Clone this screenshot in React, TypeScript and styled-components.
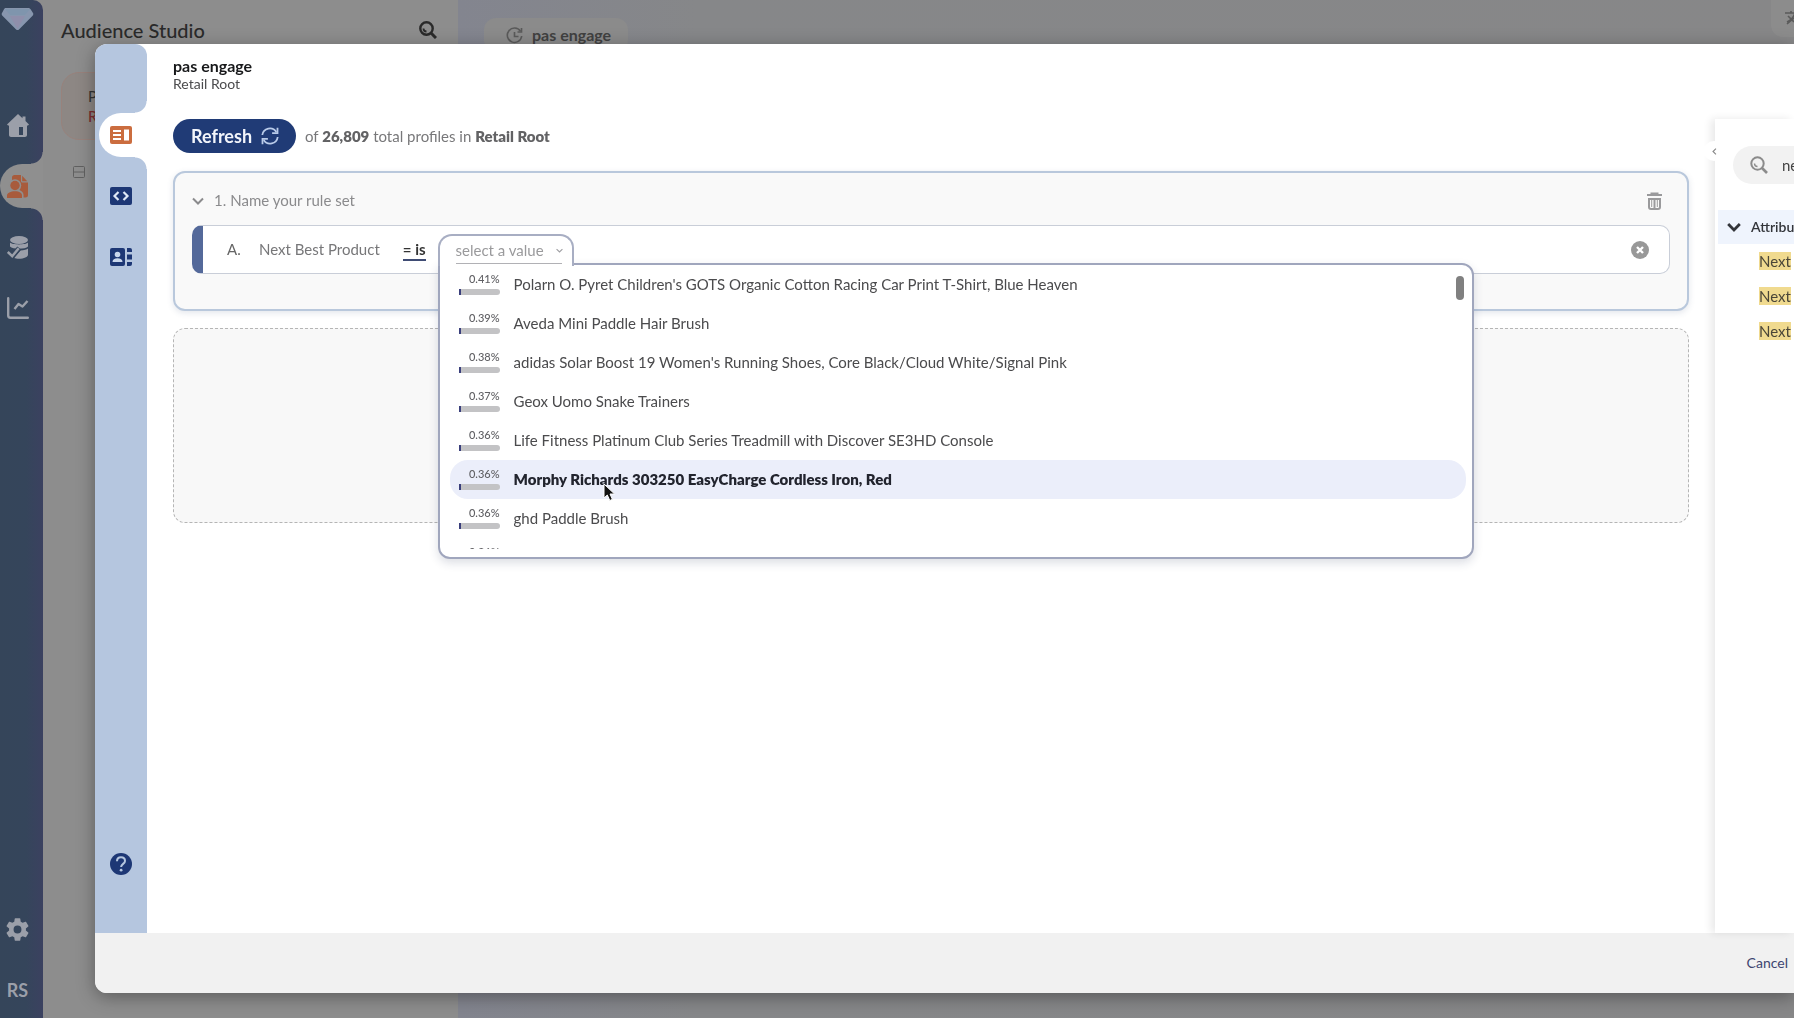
import React from "react";
import styled, { createGlobalStyle, css } from "styled-components";

const GlobalStyle = createGlobalStyle`
  *, *::before, *::after { box-sizing: border-box; }
  body {
    margin: 0;
    font-family: Lato, "Open Sans", sans-serif;
    font-size: 15px;
    line-height: 20px;
    color: #4b4b4d;
    background: #8d8d8d;
  }
  button, input, select { font: inherit; color: inherit; }
  button { border: 0; padding: 0; background: none; cursor: pointer; }
  svg { display: block; flex: none; }
`;

/* ---------- app behind the dialog ---------- */

const Shell = styled.div`
  display: flex;
  height: 100vh;
  overflow: hidden;
`;

const notch = (size: number, fill: string) => css`
  &::before,
  &::after {
    content: "";
    position: absolute;
    right: 0;
    width: ${size}px;
    height: ${size}px;
  }
  &::before {
    bottom: 100%;
    background: radial-gradient(circle at 0 0, transparent ${size - 1}px, ${fill} ${size}px);
  }
  &::after {
    top: 100%;
    background: radial-gradient(circle at 0 100%, transparent ${size - 1}px, ${fill} ${size}px);
  }
`;

const Sidebar = styled.nav`
  display: flex;
  flex-direction: column;
  flex: 0 0 43px;
  gap: 17px;
  padding-bottom: 6px;
  color: #9b9fa9;
  background: linear-gradient(90deg, #35455a 0%, #35455b 60%, #3b4160 100%);
  border-top-right-radius: 10px;
`;

const Logo = styled.div`
  height: 86px;
  padding: 7px 0 0 1px;
`;

const SideItem = styled.button<{ $active?: boolean }>`
  position: relative;
  display: flex;
  align-items: center;
  justify-content: center;
  height: 44px;
  padding-right: 8px;
  font-size: 18px;
  font-weight: 700;
  ${(p) =>
    p.$active &&
    css`
      color: #a85b3c;
      background: #8f8f8f;
      border-radius: 22px 0 0 22px;
      ${notch(12, "#8f8f8f")}
    `}
`;

const Spacer = styled.div`
  flex: 1;
`;

const Explorer = styled.section`
  display: flex;
  flex-direction: column;
  flex: 0 0 415px;
  padding: 16px 21px 0 18px;
  background: #8d8d8d;
`;

const ExplorerHead = styled.header`
  display: flex;
  align-items: center;
  justify-content: space-between;
  color: #2a2a2a;
`;

const ExplorerTitle = styled.h1`
  margin: 0;
  font-size: 20px;
  line-height: 28px;
  font-weight: 500;
`;

const ParentCard = styled.div`
  height: 68px;
  margin-top: 28px;
  padding: 13px 26px;
  color: #333;
  background: #8d8784;
  border: 1px solid #98827c;
  border-radius: 18px;
  strong {
    display: block;
    color: #7a2d30;
    font-weight: 500;
  }
`;

const TreeToggle = styled.button`
  width: 12px;
  margin: 26px 0 0 12px;
  color: #606060;
`;

const Workspace = styled.section`
  display: flex;
  flex: 1;
  align-items: flex-start;
  justify-content: space-between;
  min-width: 0;
  padding-left: 26px;
  background: linear-gradient(90deg, #83858f 0, #868789 240px, #878788 100%);
`;

const WorkTab = styled.div`
  display: flex;
  align-items: center;
  gap: 9px;
  height: 34px;
  margin-top: 18px;
  padding: 0 17px 0 22px;
  color: #414141;
  font-size: 16px;
  font-weight: 700;
  background: #8b8b8b;
  border-radius: 12px;
`;

const LanguageButton = styled.button`
  width: 23px;
  height: 37px;
  padding-left: 14px;
  overflow: hidden;
  color: #5a5a5a;
  background: #8c8c8c;
  border-radius: 0 0 0 12px;
`;

/* ---------- dialog ---------- */

const Dialog = styled.div`
  position: fixed;
  inset: 44px 0 25px 95px;
  display: flex;
  flex-direction: column;
  overflow: hidden;
  background: #fff;
  border-radius: 12px 0 0 12px;
  box-shadow: 0 4px 18px rgba(0, 0, 0, 0.35);
`;

const DialogBody = styled.div`
  display: flex;
  flex: 1;
  min-height: 0;
`;

const Rail = styled.nav`
  display: flex;
  flex-direction: column;
  flex: 0 0 52px;
  gap: 17px;
  padding: 69px 0 47px;
  color: #1d3775;
  background: #b5c6df;
  border-top-right-radius: 12px;
`;

const RailItem = styled.button<{ $active?: boolean }>`
  position: relative;
  display: flex;
  align-items: center;
  justify-content: center;
  height: 44px;
  ${(p) =>
    p.$active &&
    css`
      margin-left: 4px;
      padding-right: 4px;
      color: #cb6d3f;
      background: #fff;
      border-radius: 22px 0 0 22px;
      ${notch(12, "#fff")}
    `}
`;

const Main = styled.main`
  flex: 1;
  min-width: 0;
  padding: 12px 26px 0;
`;

const Segment = styled.h2`
  margin: 0;
  color: #17181a;
  font-size: 16px;
  line-height: 20px;
  font-weight: 700;
`;

const Folder = styled.p`
  margin: 0;
  font-size: 14px;
  line-height: 16px;
`;

const CountRow = styled.div`
  display: flex;
  align-items: center;
  gap: 9px;
  margin-top: 27px;
  color: #78787a;
  b {
    color: #626264;
    font-weight: 800;
  }
`;

const Refresh = styled.button`
  display: flex;
  align-items: center;
  gap: 9px;
  height: 34px;
  padding: 0 17px 0 18px;
  color: #f2f5fb;
  font-size: 18px;
  font-weight: 700;
  background: #203b76;
  border-radius: 17px;
`;

const RuleSet = styled.section`
  margin-top: 18px;
  padding: 16px 17px 35px;
  background: #f9f9f9;
  border: 2px solid #b9c8dc;
  border-radius: 12px;
  box-shadow: 0 2px 6px rgba(60, 80, 120, 0.14);
`;

const RuleSetHead = styled.div`
  display: flex;
  align-items: center;
  height: 24px;
  padding: 0 8px 0 0;
  color: #8b8b8d;
`;

const RuleName = styled.label`
  display: flex;
  flex: 1;
  gap: 4px;
  margin-left: 10px;
  padding-bottom: 2px;
  input {
    flex: 1;
    padding: 0;
    border: 0;
    outline: 0;
    background: none;
  }
  input::placeholder {
    color: #8b8b8d;
    opacity: 1;
  }
`;

const Rule = styled.div`
  display: flex;
  align-items: center;
  height: 49px;
  margin-top: 12px;
  padding: 0 20px 0 24px;
  background: #fff;
  border: 1px solid #c9ced8;
  border-left: 11px solid #54699a;
  border-radius: 10px;
`;

const Letter = styled.span`
  width: 32px;
  padding-bottom: 2px;
  color: #666;
`;

const Field = styled.span`
  padding-bottom: 2px;
  color: #777779;
`;

const Operator = styled.button`
  margin: 2px 12px 0 23px;
  color: #333;
  font-weight: 700;
  line-height: 19px;
  border-bottom: 2px solid #3f4c74;
`;

const Picker = styled.div`
  position: relative;
  align-self: flex-start;
  width: 136px;
  margin: 8px auto 0 0;
`;

const PickerTab = styled.div`
  position: relative;
  z-index: 2;
  height: 32px;
  padding: 0 14px 0 16px;
  background: #fff;
  border: 2px solid #a8aec3;
  border-bottom: 0;
  border-radius: 14px 14px 0 0;
  svg {
    position: absolute;
    top: 11px;
    right: 9px;
    color: #a0a0a4;
  }
`;

const PickerSelect = styled.select`
  width: 106px;
  height: 28px;
  padding: 0;
  color: #9a9a9c;
  background: none;
  border: 0;
  border-bottom: 1px solid #b1b1b5;
  outline: 0;
  appearance: none;
`;

const Menu = styled.div`
  position: absolute;
  z-index: 1;
  top: 29px;
  left: 0;
  display: flex;
  width: 1036px;
  max-width: 70vw;
  padding-bottom: 8px;
  background: #fff;
  border: 2px solid #a0a6bd;
  border-radius: 0 12px 12px 12px;
  box-shadow: 0 4px 10px rgba(40, 50, 90, 0.16);
`;

const Options = styled.ul`
  flex: 1;
  height: 284px;
  margin: 0 6px 0 10px;
  padding: 0;
  overflow: hidden;
  list-style: none;
`;

const Option = styled.li<{ $hot?: boolean }>`
  display: flex;
  align-items: center;
  gap: 14px;
  height: 39px;
  padding: 0 0 2px 9px;
  border-radius: 18px;
  ${(p) =>
    p.$hot &&
    css`
      color: #22242e;
      font-weight: 800;
      background: #ebeefa;
    `}
`;

const Share = styled.div`
  width: 41px;
  color: #606064;
  font-size: 11px;
  line-height: 14px;
  font-weight: 500;
  text-align: right;
`;

const Meter = styled.div`
  height: 6px;
  margin-top: 3px;
  overflow: hidden;
  background: #c3c3c5;
  border-radius: 0 3px 3px 0;
  div {
    height: 100%;
    min-width: 2px;
    background: #3a3f7c;
  }
`;

const Thumb = styled.div`
  position: absolute;
  top: 11px;
  right: 8px;
  width: 8px;
  height: 24px;
  background: #808080;
  border-radius: 4px;
`;

const Pointer = styled.svg`
  position: absolute;
  top: 218px;
  left: 163px;
`;

const DropZone = styled.div`
  height: 195px;
  margin-top: 17px;
  background: #f8f8f8;
  border: 1px dashed #b5b5b5;
  border-radius: 12px;
`;

const Library = styled.aside`
  position: relative;
  flex: 0 0 79px;
  min-width: 0;
  margin-top: 75px;
  padding: 27px 0 0 3px;
  background: #fff;
  box-shadow: -4px 0 8px rgba(0, 0, 0, 0.09);
`;

const Collapse = styled.button`
  position: absolute;
  top: 22px;
  left: -11px;
  display: flex;
  align-items: center;
  justify-content: center;
  width: 20px;
  height: 20px;
  color: #8a8a8a;
  background: #fff;
  border-radius: 50%;
`;

const Search = styled.label`
  display: flex;
  align-items: center;
  gap: 14px;
  height: 38px;
  margin-left: 15px;
  padding-left: 17px;
  color: #8b8b8b;
  background: #f2f2f2;
  border-radius: 19px 0 0 19px;
  input {
    flex: 1;
    width: 0;
    min-width: 0;
    padding: 0;
    color: #444;
    background: none;
    border: 0;
    outline: 0;
  }
`;

const Group = styled.button`
  display: flex;
  align-items: center;
  gap: 10px;
  width: 100%;
  height: 34px;
  margin-top: 26px;
  padding-left: 9px;
  overflow: hidden;
  color: #33353a;
  font-size: 14px;
  font-weight: 600;
  background: #eff4fd;
`;

const Attributes = styled.ul`
  margin: 0;
  padding: 0 0 0 41px;
  list-style: none;
  li {
    height: 35px;
    padding-top: 7px;
    white-space: nowrap;
  }
  mark {
    color: #4a4638;
    background: #f0da8f;
  }
`;

const Footer = styled.footer`
  display: flex;
  align-items: center;
  justify-content: flex-end;
  height: 60px;
  padding-right: 6px;
  background: #f1f1f1;
`;

const Cancel = styled.button`
  color: #3d4570;
  font-size: 14px;
`;

/* ---------- icons ---------- */

const Gem = () => (
  <svg width="33" height="24" viewBox="0 0 33 24">
    <path d="M5 1h22c1 0 2 .5 2.600 1.300L32 6c.5.800.4 1.700-.2 2.400L18 22.400c-.9.900-2 .9-2.900 0L1.200 8.400C.6 7.700.5 6.800 1 6l2-3.700C3.400 1.500 4.200 1 5 1Z" fill="#8796ae" />
    <path d="M9 9h15l-7.500 13Z" fill="#8f8fab" />
    <path d="M4 2h25l-5 6H9Z" fill="#7f95ad" />
  </svg>
);

const Home = () => (
  <svg width="22" height="23" viewBox="0 0 22 23" fill="currentColor">
    <path d="M11 0l4.500 4.200V2.500h3v4.600L22 10.500l-1.300 1.300-.7-.5V21c0 1.100-.9 2-2 2H4c-1.100 0-2-.9-2-2v-9.700l-.7.500L0 10.500 11 0Z" />
    <path d="M12 13h4v8h-4z" fill="#35455b" />
  </svg>
);

const PersonFile = () => (
  <svg width="22" height="23" viewBox="0 0 22 23">
    <path d="M5 2.500C5 1.100 6 0 7.500 0H14v6c0 .8.5 1.500 1.500 1.500H21V20c0 1.700-1 2.500-2.500 2.500H5Z" fill="currentColor" />
    <path d="M15.200.8v5.400h5L15.200.8Z" fill="currentColor" />
    <circle cx="8" cy="10.500" r="6.200" fill="#8f8f8f" />
    <path d="M0 24v-4c0-4 3-5.500 8-5.500s8.500 2 8.500 5.500v4Z" fill="#8f8f8f" />
    <circle cx="8" cy="10.500" r="4.700" fill="currentColor" />
    <path d="M0 23v-2.500C0 18 3.500 16.300 8 16.300s7 1.700 7 4.200V23Z" fill="currentColor" />
  </svg>
);

const DatabaseCheck = () => (
  <svg width="22" height="23" viewBox="0 0 22 23">
    <ellipse cx="12" cy="4" rx="9" ry="4" fill="currentColor" />
    <path d="M3 6.500c2 2.500 16 2.500 18 0v4c-2.500 3-15.500 3-18 0Z" fill="currentColor" />
    <path d="M21 12.500v6c0 2.500-4 4.300-9 4.300-2 0-3.500-.2-5-.7l6.500-7.600c3.500-.2 6.500-1 7.500-2Z" fill="currentColor" />
    <path d="M1.200 16.500l4 4 7-8.500" fill="none" stroke="#35455b" strokeWidth="5" />
    <path d="M.8 16l4.400 4.200 6.500-8" fill="none" stroke="currentColor" strokeWidth="2.500" />
  </svg>
);

const Chart = () => (
  <svg width="22" height="22" viewBox="0 0 22 22" fill="none" stroke="currentColor" strokeWidth="2.400" strokeLinecap="round" strokeLinejoin="round">
    <path d="M1.200 1.200v17.300c0 1.300.9 2.200 2.200 2.200h17.400" />
    <path d="M7.500 12l4-5 4 2.500L20.500 4" strokeLinecap="butt" />
  </svg>
);

const Gear = () => (
  <svg width="27" height="27" viewBox="0 0 24 24" fill="currentColor">
    <path d="M19.430 12.980c.04-.32.07-.64.07-.98s-.03-.66-.07-.98l2.110-1.650c.19-.15.24-.42.12-.64l-2-3.460c-.12-.22-.39-.3-.61-.22l-2.490 1c-.52-.4-1.080-.73-1.690-.98l-.38-2.650C14.460 2.180 14.250 2 14 2h-4c-.25 0-.46.18-.49.42l-.38 2.650c-.61.25-1.170.59-1.690.98l-2.490-1c-.23-.09-.49 0-.61.22l-2 3.460c-.13.22-.07.49.12.64l2.110 1.650c-.04.32-.07.65-.07.98s.03.66.07.98l-2.110 1.650c-.19.15-.24.42-.12.64l2 3.460c.12.22.39.3.61.22l2.490-1c.52.4 1.080.73 1.690.98l.38 2.650c.03.24.24.42.49.42h4c.25 0 .46-.18.49-.42l.38-2.650c.61-.25 1.170-.59 1.690-.98l2.490 1c.23.09.49 0 .61-.22l2-3.460c.12-.22.07-.49-.12-.64l-2.110-1.650ZM12 15.500a3.500 3.500 0 1 1 0-7 3.500 3.500 0 0 1 0 7Z" />
  </svg>
);

const Magnifier = ({ width = 2.4 }: { width?: number }) => (
  <svg width="18" height="18" viewBox="0 0 18 18" fill="none" stroke="currentColor" strokeWidth={width}>
    <circle cx="7.500" cy="7.500" r="6.200" />
    <path d="M12 12l5 5" strokeWidth={width + 0.6} />
    <path d="M4.500 7.500a3 3 0 0 0 3 3" strokeWidth={width - 0.6} />
  </svg>
);

const History = () => (
  <svg width="17" height="17" viewBox="0 0 17 17" fill="none" stroke="currentColor" strokeWidth="1.600" opacity=".65">
    <path d="M14.500 4.200A7.200 7.200 0 1 0 15.700 9" />
    <path d="M15.500 1v4h-4M8.500 5v4.500h4" />
  </svg>
);

const MinusBox = () => (
  <svg width="12" height="12" viewBox="0 0 12 12" fill="none" stroke="currentColor">
    <rect x=".5" y=".5" width="11" height="11" rx="1" />
    <path d="M1 6h10" />
  </svg>
);

const Translate = () => (
  <svg width="18" height="18" viewBox="0 0 18 18" fill="none" stroke="currentColor" strokeWidth="1.600">
    <path d="M0 3h12M6 1v2M2 14l7-6M3 6l6 6M10 3C9 7 6 10 2 12" />
  </svg>
);

const Layout = () => (
  <svg width="22" height="18" viewBox="0 0 22 18">
    <rect width="22" height="18" rx="2" fill="currentColor" />
    <path d="M3 4h8v2H3zM3 8h8v2H3zM3 12h8v2H3zM14 3.500h5v11h-5z" fill="#fff" />
  </svg>
);

const Code = () => (
  <svg width="22" height="18" viewBox="0 0 22 18">
    <rect width="22" height="18" rx="2" fill="currentColor" />
    <path d="M8.500 5L4.500 9l4 4M13.500 5l4 4-4 4" fill="none" stroke="#dfe8f6" strokeWidth="2.200" />
  </svg>
);

const Contacts = () => (
  <svg width="22" height="18" viewBox="0 0 22 18">
    <rect width="15" height="18" rx="2" fill="currentColor" />
    <circle cx="7.500" cy="6.500" r="2.800" fill="#c8d6ec" />
    <path d="M2.500 14c0-2.500 2-3.700 5-3.700s5 1.200 5 3.700Z" fill="#c8d6ec" />
    <path d="M17 0h3a2 2 0 0 1 2 2v2h-5zM17 6.500h5v5h-5zM17 14h5v2a2 2 0 0 1-2 2h-3z" fill="currentColor" />
  </svg>
);

const Help = () => (
  <svg width="22" height="22" viewBox="0 0 22 22">
    <circle cx="11" cy="11" r="11" fill="currentColor" />
    <path d="M7 8.200C7 5.800 8.700 4.300 11 4.300s4 1.400 4 3.600c0 3-3.900 3-3.900 6.200" fill="none" stroke="#b5c6df" strokeWidth="2" />
    <circle cx="11.100" cy="17.200" r="1.400" fill="#b5c6df" />
  </svg>
);

const Sync = () => (
  <svg width="18" height="18" viewBox="0 0 18 18" fill="none" stroke="#b9cbe9" strokeWidth="1.800">
    <path d="M1.300 8A7.600 7.600 0 0 1 15.300 5M16.700 10A7.600 7.600 0 0 1 2.700 13" />
    <path d="M16.500.8v5.400h-5.400M1.500 17.200v-5.400h5.400" />
  </svg>
);

const Chevron = ({ size = 12, stroke = 2, turn = 0 }: { size?: number; stroke?: number; turn?: number }) => (
  <svg width={size} height={size} viewBox="0 0 12 12" fill="none" stroke="currentColor" strokeWidth={stroke}>
    <path d="M1 3.500l5 5 5-5" transform={`rotate(${turn} 6 6)`} />
  </svg>
);

const Trash = () => (
  <svg width="15" height="18" viewBox="0 0 15 18" fill="none" stroke="#9a9a9c">
    <path d="M0 3h15" strokeWidth="2" />
    <path d="M3.500 1.200h8" strokeWidth="1.600" />
    <path d="M2 7h11v8c0 1.200-.8 2-2 2H4c-1.200 0-2-.8-2-2ZM7.500 8v8" strokeWidth="2" />
    <path d="M4.700 8v7M10.300 7v8" strokeWidth="1" />
  </svg>
);

const Clear = () => (
  <svg width="18" height="18" viewBox="0 0 18 18">
    <circle cx="9" cy="9" r="9" fill="#989898" />
    <path d="M6 6l6 6M12 6l-6 6" stroke="#fff" strokeWidth="2.400" />
  </svg>
);

/* ---------- data ---------- */

const products = [
  { share: 0.41, name: "Polarn O. Pyret Children's GOTS Organic Cotton Racing Car Print T-Shirt, Blue Heaven" },
  { share: 0.39, name: "Aveda Mini Paddle Hair Brush" },
  { share: 0.38, name: "adidas Solar Boost 19 Women's Running Shoes, Core Black/Cloud White/Signal Pink" },
  { share: 0.37, name: "Geox Uomo Snake Trainers" },
  { share: 0.36, name: "Life Fitness Platinum Club Series Treadmill with Discover SE3HD Console" },
  { share: 0.36, name: "Morphy Richards 303250 EasyCharge Cordless Iron, Red", hot: true },
  { share: 0.36, name: "ghd Paddle Brush" },
  { share: 0.36, name: "" },
];

export default function App() {
  return (
    <>
      <GlobalStyle />
      <Shell>
        <Sidebar aria-label="Application">
          <Logo><Gem /></Logo>
          <SideItem aria-label="Home"><Home /></SideItem>
          <SideItem aria-label="Audiences" $active><PersonFile /></SideItem>
          <SideItem aria-label="Data"><DatabaseCheck /></SideItem>
          <SideItem aria-label="Analytics"><Chart /></SideItem>
          <Spacer />
          <SideItem aria-label="Settings"><Gear /></SideItem>
          <SideItem>RS</SideItem>
        </Sidebar>
        <Explorer>
          <ExplorerHead>
            <ExplorerTitle>Audience Studio</ExplorerTitle>
            <button aria-label="Search"><Magnifier /></button>
          </ExplorerHead>
          <ParentCard>P<strong>R</strong></ParentCard>
          <TreeToggle aria-label="Collapse"><MinusBox /></TreeToggle>
        </Explorer>
        <Workspace>
          <WorkTab><History />pas engage</WorkTab>
          <LanguageButton aria-label="Language"><Translate /></LanguageButton>
        </Workspace>
      </Shell>

      <Dialog role="dialog" aria-labelledby="segment-name">
        <DialogBody>
          <Rail aria-label="Views">
            <RailItem aria-label="Rules" $active><Layout /></RailItem>
            <RailItem aria-label="Code"><Code /></RailItem>
            <RailItem aria-label="Profiles"><Contacts /></RailItem>
            <Spacer />
            <RailItem aria-label="Help"><Help /></RailItem>
          </Rail>

          <Main>
            <Segment id="segment-name">pas engage</Segment>
            <Folder>Retail Root</Folder>
            <CountRow>
              <Refresh>Refresh <Sync /></Refresh>
              <span>of <b>26,809</b> total profiles in <b>Retail Root</b></span>
            </CountRow>

            <RuleSet>
              <RuleSetHead>
                <button aria-label="Collapse rule set"><Chevron /></button>
                <RuleName>1. <input aria-label="Rule set name" placeholder="Name your rule set" /></RuleName>
                <button aria-label="Delete rule set"><Trash /></button>
              </RuleSetHead>
              <Rule>
                <Letter>A.</Letter>
                <Field>Next Best Product</Field>
                <Operator>= is</Operator>
                <Picker>
                  <PickerTab>
                    <PickerSelect aria-label="Value" defaultValue="">
                      <option value="">select a value</option>
                    </PickerSelect>
                    <Chevron size={7} stroke={2} />
                  </PickerTab>
                  <Menu>
                    <Options role="listbox" aria-label="Values">
                      {products.map((p, i) => (
                        <Option key={i} role="option" aria-selected={!!p.hot} $hot={p.hot}>
                          <Share>
                            {p.share}%
                            <Meter><div style={{ width: `${p.share}%` }} /></Meter>
                          </Share>
                          {p.name}
                        </Option>
                      ))}
                    </Options>
                    <Thumb />
                    <Pointer width="13" height="19" viewBox="0 0 13 19" aria-hidden="true">
                      <path d="M1 1v14l3.300-3 2.500 5.500 2.600-1.200L7 11h4.600Z" fill="#111" stroke="#fff" strokeWidth="1" />
                    </Pointer>
                  </Menu>
                </Picker>
                <button aria-label="Remove rule"><Clear /></button>
              </Rule>
            </RuleSet>

            <DropZone />
          </Main>

          <Library>
            <Collapse aria-label="Collapse panel"><Chevron size={7} turn={90} /></Collapse>
            <Search>
              <Magnifier width={2} />
              <input aria-label="Search attributes" defaultValue="ne" />
            </Search>
            <Group><Chevron size={14} stroke={2.4} />Attribu</Group>
            <Attributes>
              <li><mark>Next</mark> B</li>
              <li><mark>Next</mark> B</li>
              <li><mark>Next</mark> B</li>
            </Attributes>
          </Library>
        </DialogBody>
        <Footer><Cancel>Cancel</Cancel></Footer>
      </Dialog>
    </>
  );
}
